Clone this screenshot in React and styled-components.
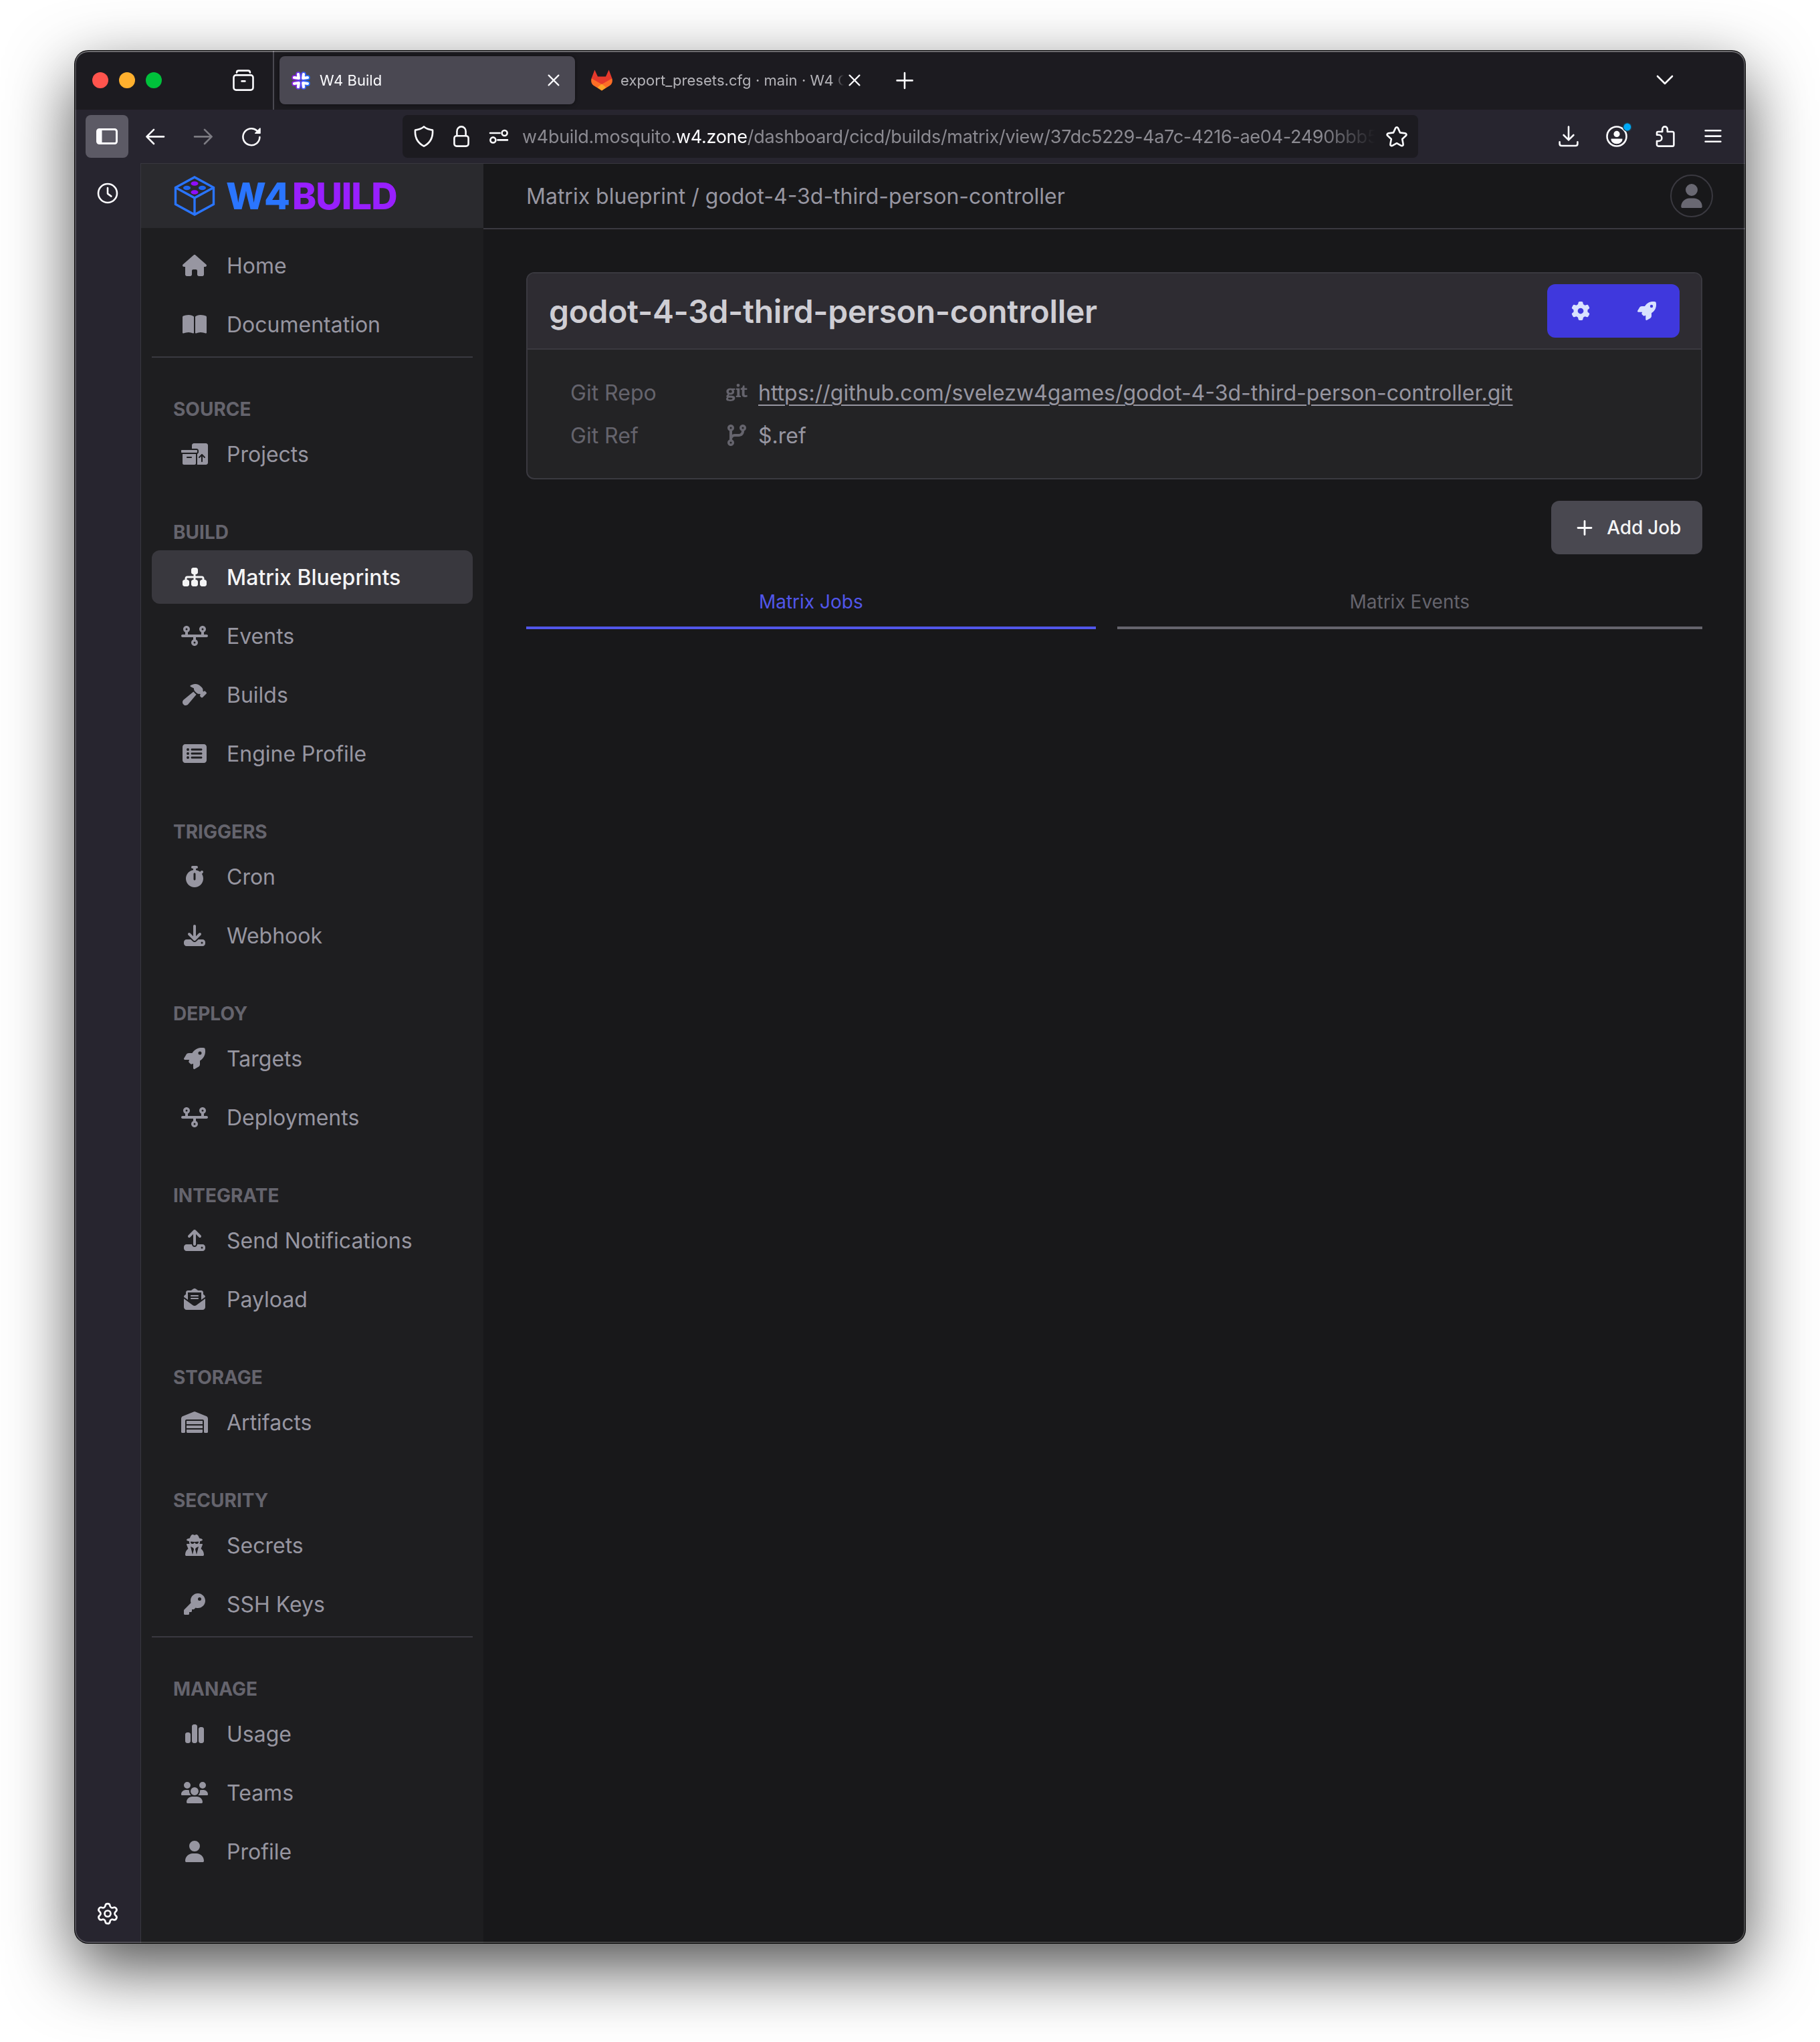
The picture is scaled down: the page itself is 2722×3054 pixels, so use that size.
import React from "react";
import styled, { createGlobalStyle } from "styled-components";
import { Settings } from "lucide-react";
import {
  FaBookOpen,
  FaBoxesPacking,
  FaChartSimple,
  FaCodeBranch,
  FaDownload,
  FaEnvelopeOpenText,
  FaGear,
  FaGit,
  FaHammer,
  FaHouse,
  FaKey,
  FaRectangleList,
  FaRocket,
  FaSitemap,
  FaStopwatch,
  FaTimeline,
  FaUpload,
  FaUser,
  FaUsers,
  FaUserSecret,
  FaWarehouse
} from "react-icons/fa6";

const colors = {
  chrome: "#1c1b20",
  toolbar: "#27252f",
  line: "#3a3940",
  page: "#18181a",
  sidebar: "#1e1e20",
  text: "#9796a1",
  muted: "#65646d",
  primary: "#5156ea"
};

const GlobalStyle = createGlobalStyle`
  * {
    box-sizing: border-box;
  }
  body {
    margin: 0;
    background: #fff;
    font-family: Inter, "Liberation Sans", sans-serif;
    overflow: hidden;
  }
`;

const Desktop = styled.div`
  width: 2722px;
  height: 3054px;
  padding: 76px 112px 148px;
`;

const Window = styled.div`
  position: relative;
  display: flex;
  flex-direction: column;
  width: 2498px;
  height: 2830px;
  overflow: hidden;
  border-radius: 20px;
  background: ${colors.toolbar};
  box-shadow: 0 0 0 1px #000, 0 36px 100px rgba(0, 0, 0, 0.7);

  &::after {
    content: "";
    position: absolute;
    inset: 0;
    border-radius: 20px;
    box-shadow: inset 0 0 0 2px rgba(255, 255, 255, 0.2),
      inset 0 2px 0 rgba(255, 255, 255, 0.2);
    pointer-events: none;
  }
`;

/* browser chrome */

const TabStrip = styled.div`
  display: flex;
  align-items: center;
  height: 88px;
  flex: none;
  padding: 0 104px 0 26px;
  background: ${colors.chrome};
`;

const Lights = styled.div`
  display: flex;
  gap: 16px;
  margin-right: 106px;
`;

const Light = styled.span`
  width: 24px;
  height: 24px;
  border-radius: 50%;
  background: ${props => props.$color};
`;

const StripDivider = styled.div`
  width: 2px;
  height: 100%;
  margin: 0 8px 0 28px;
  background: #4a4951;
`;

const Tab = styled.div`
  display: flex;
  align-items: center;
  width: 442px;
  height: 72px;
  margin-right: 8px;
  padding: 0 16px;
  border-radius: 8px;
  color: ${props => (props.$active ? "#fbfbfe" : "#b4b3b8")};
  background: ${props => (props.$active ? "#4a4852" : "transparent")};
  box-shadow: ${props => (props.$active ? "0 0 6px rgba(0, 0, 0, 0.5)" : "none")};
`;

const TabLabel = styled.span`
  flex: 1;
  min-width: 0;
  margin-left: 12px;
  overflow: hidden;
  white-space: nowrap;
  font-size: 22px;
  line-height: 32px;
  letter-spacing: 0.05px;
  mask-image: linear-gradient(to left, transparent, #000 16px);
`;

const NewTab = styled.div`
  display: flex;
  margin-left: 19px;
  margin-right: auto;
`;

const Glyph = styled.svg`
  display: block;
  width: 32px;
  height: 32px;
  flex: none;
  fill: none;
  stroke: #fbfbfe;
  stroke-width: ${props => props.$weight || 1.3};
  stroke-linecap: round;
  stroke-linejoin: round;
`;

const Fox = styled.svg`
  width: 32px;
  height: 32px;
  flex: none;
`;

const NavBar = styled.div`
  display: flex;
  align-items: center;
  gap: 8px;
  height: 80px;
  flex: none;
  padding: 0 16px;
`;

const ToolButton = styled.div`
  display: flex;
  align-items: center;
  justify-content: center;
  width: 64px;
  height: 64px;
  border-radius: 8px;
  background: ${props => (props.$active ? "#5c5a65" : "transparent")};
  opacity: ${props => (props.$disabled ? 0.4 : 1)};
`;

const UrlBar = styled.div`
  display: flex;
  align-items: center;
  width: 1519px;
  height: 64px;
  margin: 0 185px 0 186px;
  padding: 0 4px;
  border-radius: 8px;
  background: ${colors.chrome};
`;

const UrlIcon = styled.div`
  display: flex;
  justify-content: center;
  width: 56px;
  flex: none;
`;

const Url = styled.div`
  flex: 1;
  min-width: 0;
  margin: 2px 4px 0 7px;
  overflow: hidden;
  white-space: nowrap;
  color: #8b8a91;
  font-size: 27px;
  line-height: 40px;
  letter-spacing: -0.3px;
  mask-image: linear-gradient(to left, transparent, #000 80px);

  b {
    font-weight: 400;
    color: #fbfbfe;
  }
`;

const Below = styled.div`
  display: flex;
  flex: 1;
  min-height: 0;
`;

const Rail = styled.div`
  display: flex;
  flex-direction: column;
  align-items: center;
  justify-content: space-between;
  width: 98px;
  padding: 29px 0 26px;
  color: #fbfbfe;
`;

const Page = styled.div`
  display: flex;
  flex: 1;
  min-width: 0;
  border-top: 1px solid #38373e;
  border-left: 1px solid #38373e;
  background: ${colors.page};
`;

/* app sidebar */

const Sidebar = styled.nav`
  width: 512px;
  flex: none;
  background: ${colors.sidebar};
`;

const Brand = styled.div`
  display: flex;
  align-items: center;
  height: 96px;
  padding-left: 48px;
  background: #2a2a2e;
`;

const BrandName = styled.div`
  display: flex;
  margin-left: 15px;
  font-size: 55px;
  font-weight: 800;
  line-height: 96px;
  letter-spacing: -1px;
`;

const BrandPart = styled.span`
  color: ${props => props.$color};
  width: ${props => props.$width}px;
  transform: scaleX(${props => props.$stretch});
  transform-origin: left;
`;

const Menu = styled.div`
  padding: 16px 16px 0;
`;

const Items = styled.div`
  display: flex;
  flex-direction: column;
  gap: 8px;
`;

const SectionTitle = styled.div`
  margin: 56px 0 6px;
  padding-left: 32px;
  color: ${colors.muted};
  font-size: 28px;
  font-weight: 700;
  line-height: 42px;
`;

const Item = styled.div`
  display: flex;
  align-items: center;
  height: 80px;
  padding-left: 32px;
  border-radius: 12px;
  font-size: 32px;
  font-weight: ${props => (props.$active ? 500 : 400)};
  color: ${props => (props.$active ? "#f4f4f5" : colors.text)};
  background: ${props => (props.$active ? "#39383e" : "transparent")};
`;

const ItemIcon = styled.span`
  display: flex;
  justify-content: center;
  width: 64px;
  margin-right: 16px;

  svg {
    width: 40px;
    height: 32px;
  }
`;

const Divider = styled.div`
  height: 2px;
  margin-top: 8px;
  background: ${colors.line};
`;

/* page content */

const Main = styled.main`
  flex: 1;
  min-width: 0;
`;

const TopBar = styled.header`
  display: flex;
  align-items: center;
  justify-content: space-between;
  height: 98px;
  padding: 0 48px 0 64px;
  border-bottom: 2px solid ${colors.line};
  color: ${colors.text};
  font-size: 32px;
`;

const Avatar = styled.div`
  display: flex;
  align-items: center;
  justify-content: center;
  width: 64px;
  height: 64px;
  border: 2px solid ${colors.line};
  border-radius: 50%;
  color: #696872;

  svg {
    width: 32px;
    height: 36px;
  }
`;

const Content = styled.div`
  padding: 64px;
`;

const Card = styled.section`
  overflow: hidden;
  border: 2px solid ${colors.line};
  border-radius: 12px;
  background: #232325;
`;

const CardHeader = styled.div`
  display: flex;
  align-items: center;
  justify-content: space-between;
  height: 114px;
  padding: 0 32px;
  border-bottom: 2px solid ${colors.line};
  background: #2e2c32;
`;

const CardTitle = styled.h1`
  margin: 0;
  color: #cfced4;
  font-size: 48px;
  font-weight: 600;
  letter-spacing: -0.33px;
`;

const ButtonGroup = styled.div`
  display: flex;
  width: 198px;
  height: 80px;
  border-radius: 12px;
  background: #3f38dd;
`;

const IconButton = styled.div`
  display: flex;
  flex: 1;
  align-items: center;
  justify-content: center;
  color: #d9e2ff;
  font-size: 28px;
`;

const CardBody = styled.div`
  padding: 32px 64px;
`;

const Field = styled.div`
  display: flex;
  align-items: center;
  height: 64px;
  color: ${colors.text};
  font-size: 32px;
`;

const FieldLabel = styled.span`
  width: 217px;
  color: ${colors.muted};
`;

const FieldIcon = styled.span`
  display: flex;
  justify-content: center;
  width: 64px;
  color: ${colors.muted};
`;

const Link = styled.a`
  text-decoration: underline;
  text-decoration-thickness: 2px;
  text-underline-offset: 6px;
`;

const Actions = styled.div`
  display: flex;
  justify-content: flex-end;
  margin-top: 32px;
`;

const AddButton = styled.div`
  display: flex;
  align-items: center;
  gap: 17px;
  height: 80px;
  padding: 0 32px 0 34px;
  border-radius: 12px;
  color: #f4f4f5;
  background: #494850;
  font-size: 28px;
  font-weight: 500;
  letter-spacing: -0.2px;
`;

const Tabs = styled.div`
  display: flex;
  gap: 32px;
  margin-top: 32px;
`;

const PageTab = styled.div`
  flex: 1 1 auto;
  height: 80px;
  border-bottom: 4px solid ${props => (props.$active ? colors.primary : colors.muted)};
  color: ${props => (props.$active ? colors.primary : colors.muted)};
  font-size: 28px;
  line-height: 78px;
  text-align: center;
`;

const PETALS =
  "M12 7l.8 6L6 12M20 7l-.8 6 6.800-1M12 26l.8-6L6 21M20 26l-.8-6 6.800 1";

const W4Icon = () => (
  <Glyph viewBox="0 0 32 32">
    <defs>
      <linearGradient id="w4" x1="0" x2="1">
        <stop offset="0" stopColor="#8a1fe0" />
        <stop offset="1" stopColor="#2471ff" />
      </linearGradient>
    </defs>
    <path d={PETALS} stroke="url(#w4)" strokeWidth="7.5" />
    <path d={PETALS} stroke="#fff" strokeWidth="4.2" />
  </Glyph>
);

const GitlabIcon = () => (
  <Fox viewBox="0 0 32 32">
    <path fill="#e5392c" d="M5.4.6 10 10.5h12L26.6.6l4.8 12.7L16 31 .6 13.3z" />
    <path
      fill="#fc6d26"
      d="M.6 13.3C-.8 18.5 1 21.6 4 24l12 7.5L28 24c3-2.4 4.8-5.5 3.4-10.7L16 22z"
    />
    <path fill="#e5392c" d="M4.500 11 16 22l11.500-11z" />
    <path fill="#fca326" d="m9.600 26.700 6.400-5.200 6.400 5.200L16 31.500z" />
  </Fox>
);

const CloseIcon = () => (
  <Glyph viewBox="0 0 16 16" $weight={1.1}>
    <path d="m4.3 4.3 7.4 7.4M11.7 4.3l-7.4 7.4" />
  </Glyph>
);

const Cube = () => (
  <svg width="64" height="60" viewBox="0 0 64 60" fill="none">
    <path
      d="M32 2 60.5 17.5v25L32 58 3.5 42.5v-25zM3.5 17.5 32 33l28.5-15.5M32 33v25"
      stroke="#2a75ff"
      strokeWidth="3.4"
    />
    <ellipse cx="32" cy="11.5" rx="5.5" ry="3.3" fill="#8f0dff" />
    <ellipse cx="32" cy="24.5" rx="5.5" ry="3.3" fill="#8f0dff" />
    <ellipse cx="20.5" cy="18" rx="5.5" ry="3.3" fill="#1f66f0" />
    <ellipse cx="43.5" cy="18" rx="5.5" ry="3.3" fill="#1f66f0" />
  </svg>
);

const sections = [
  {
    items: [
      { icon: FaHouse, label: "Home" },
      { icon: FaBookOpen, label: "Documentation" }
    ],
    divider: true
  },
  { title: "SOURCE", items: [{ icon: FaBoxesPacking, label: "Projects" }] },
  {
    title: "BUILD",
    items: [
      { icon: FaSitemap, label: "Matrix Blueprints", active: true },
      { icon: FaTimeline, label: "Events" },
      { icon: FaHammer, label: "Builds" },
      { icon: FaRectangleList, label: "Engine Profile" }
    ]
  },
  {
    title: "TRIGGERS",
    items: [
      { icon: FaStopwatch, label: "Cron" },
      { icon: FaDownload, label: "Webhook" }
    ]
  },
  {
    title: "DEPLOY",
    items: [
      { icon: FaRocket, label: "Targets" },
      { icon: FaTimeline, label: "Deployments" }
    ]
  },
  {
    title: "INTEGRATE",
    items: [
      { icon: FaUpload, label: "Send Notifications" },
      { icon: FaEnvelopeOpenText, label: "Payload" }
    ]
  },
  { title: "STORAGE", items: [{ icon: FaWarehouse, label: "Artifacts" }] },
  {
    title: "SECURITY",
    items: [
      { icon: FaUserSecret, label: "Secrets" },
      { icon: FaKey, label: "SSH Keys" }
    ],
    divider: true
  },
  {
    title: "MANAGE",
    items: [
      { icon: FaChartSimple, label: "Usage" },
      { icon: FaUsers, label: "Teams" },
      { icon: FaUser, label: "Profile" }
    ]
  }
];

const BrowserTabs = () => (
  <TabStrip>
    <Lights>
      <Light $color="#ff544d" />
      <Light $color="#ffb02e" />
      <Light $color="#00c13b" />
    </Lights>
    <Glyph viewBox="0 0 16 16">
      <path d="M3 2.300C3 1.200 3.700.8 4.500.8h7c.8 0 1.500.4 1.500 1.500" />
      <rect x=".75" y="4.2" width="14.5" height="11.1" rx="1.8" />
      <path d="M6.800 8.700h2.400" />
    </Glyph>
    <StripDivider />
    <Tab $active>
      <W4Icon />
      <TabLabel>W4 Build</TabLabel>
      <CloseIcon />
    </Tab>
    <Tab>
      <GitlabIcon />
      <TabLabel>export_presets.cfg · main · W4 G</TabLabel>
      <CloseIcon />
    </Tab>
    <NewTab>
      <Glyph viewBox="0 0 16 16">
        <path d="M8 2.500v11.500M2.300 8.200h11.500" />
      </Glyph>
    </NewTab>
    <Glyph viewBox="0 0 16 16">
      <path d="m2.500 5 5.500 5.500L13.500 5" />
    </Glyph>
  </TabStrip>
);

const BrowserToolbar = () => (
  <NavBar>
    <ToolButton $active>
      <Glyph viewBox="0 0 16 16" $weight={1.5}>
        <rect x=".75" y="2.75" width="14.5" height="10.5" rx="1.5" />
        <path d="M1.500 3.500h2v9h-2z" fill="#fbfbfe" />
      </Glyph>
    </ToolButton>
    <ToolButton>
      <Glyph viewBox="0 0 16 16">
        <path d="M14.500 8.200H1.800M7 2.900 1.700 8.200 7 13.500" />
      </Glyph>
    </ToolButton>
    <ToolButton $disabled>
      <Glyph viewBox="0 0 16 16">
        <path d="M1.500 8.200h12.700M9 2.900l5.300 5.300L9 13.500" />
      </Glyph>
    </ToolButton>
    <ToolButton>
      <Glyph viewBox="0 0 16 16">
        <path d="M14.200 8.500A6.250 6.250 0 1 1 12 3.600" />
        <path d="M14.500 2v3.600h-3.600z" fill="#fbfbfe" strokeWidth=".8" />
      </Glyph>
    </ToolButton>
    <UrlBar>
      <UrlIcon>
        <Glyph viewBox="0 0 16 16">
          <path d="M8 .7c1.500 1.300 4 2.200 6.500 2.600.4 5.600-2 9.700-6.500 12-4.500-2.300-6.900-6.400-6.500-12C4 2.900 6.500 2 8 .7z" />
        </Glyph>
      </UrlIcon>
      <UrlIcon>
        <Glyph viewBox="0 0 16 16">
          <rect x="2.7" y="7.6" width="10.6" height="7.7" rx="1.8" />
          <path d="M4.700 7.500V4.200a3.300 3.500 0 0 1 6.600 0v3.300" />
        </Glyph>
      </UrlIcon>
      <UrlIcon>
        <Glyph viewBox="0 0 16 16">
          <path d="M1.500 5.500h7.300M7.200 10.700h7.300" />
          <circle cx="12.3" cy="5.5" r="2" />
          <circle cx="3.7" cy="10.7" r="2" />
        </Glyph>
      </UrlIcon>
      <Url>
        w4build.mosquito.<b>w4.zone</b>
        /dashboard/cicd/builds/matrix/view/37dc5229-4a7c-4216-ae04-2490bbb5
      </Url>
      <UrlIcon>
        <Glyph viewBox="0 0 16 16">
          <path d="M8 1.100c.4 0 .7.200.9.600l1.600 3.500 3.800.5c.9.100 1.200 1.100.6 1.700l-2.800 2.600.7 3.800c.2.900-.7 1.500-1.500 1.100L8 13.100l-3.300 1.800c-.8.400-1.700-.2-1.500-1.100l.7-3.800L1.100 7.400c-.6-.6-.3-1.600.6-1.700l3.800-.5 1.600-3.500c.2-.4.500-.6.900-.6z" />
        </Glyph>
      </UrlIcon>
    </UrlBar>
    <ToolButton>
      <Glyph viewBox="0 0 16 16">
        <path d="M8 .8v9.900M4.300 7 8 10.700 11.700 7M1.300 12.200v1.300c0 .9.600 1.500 1.500 1.500h10.400c.9 0 1.500-.6 1.500-1.500v-1.300" />
      </Glyph>
    </ToolButton>
    <ToolButton>
      <Glyph viewBox="0 0 16 16" overflow="visible">
        <circle cx="8" cy="8" r="7.25" />
        <circle cx="8" cy="6.2" r="2.3" fill="#fbfbfe" stroke="none" />
        <path
          d="M4 10h8c0 2.100-1.800 3.300-4 3.300S4 12.100 4 10z"
          fill="#fbfbfe"
          strokeWidth=".6"
        />
        <circle cx="15.9" cy="1" r="3.4" fill="#1b4459" stroke="none" />
        <circle cx="15.9" cy="1" r="2.7" fill="#00a9f7" stroke="none" />
      </Glyph>
    </ToolButton>
    <ToolButton>
      <Glyph viewBox="0 0 16 16">
        <path d="M2 14.200V11.500h1.400a2 2 0 0 0 0-4.600H2V5.400c0-.5.400-.9.900-.9h3.200V2.600a1.900 1.900 0 0 1 3.800 0v1.900h3.700c.6 0 1.100.5 1.100 1.100v8.600c0 .6-.5 1.100-1.100 1.100H3.100c-.6 0-1.100-.5-1.100-1.100z" />
      </Glyph>
    </ToolButton>
    <ToolButton>
      <Glyph viewBox="0 0 16 16">
        <path d="M2.300 3.600h11.400M2.300 7.800h11.400M2.300 11.900h11.400" />
      </Glyph>
    </ToolButton>
  </NavBar>
);

const AppSidebar = () => (
  <Sidebar>
    <Brand>
      <Cube />
      <BrandName>
        <BrandPart $color="#2a75ff" $width={99} $stretch={1.03}>
          W4
        </BrandPart>
        <BrandPart $color="#981fff" $width={160} $stretch={0.99}>
          BUILD
        </BrandPart>
      </BrandName>
    </Brand>
    <Menu>
      {sections.map(section => (
        <React.Fragment key={section.title || "top"}>
          {section.title && <SectionTitle>{section.title}</SectionTitle>}
          <Items>
            {section.items.map(({ icon: Icon, label, active }) => (
              <Item key={label} $active={active}>
                <ItemIcon>
                  <Icon />
                </ItemIcon>
                {label}
              </Item>
            ))}
          </Items>
          {section.divider && <Divider />}
        </React.Fragment>
      ))}
    </Menu>
  </Sidebar>
);

const Blueprint = () => (
  <Main>
    <TopBar>
      <span>Matrix blueprint / godot-4-3d-third-person-controller</span>
      <Avatar>
        <FaUser />
      </Avatar>
    </TopBar>
    <Content>
      <Card>
        <CardHeader>
          <CardTitle>godot-4-3d-third-person-controller</CardTitle>
          <ButtonGroup>
            <IconButton>
              <FaGear />
            </IconButton>
            <IconButton>
              <FaRocket />
            </IconButton>
          </ButtonGroup>
        </CardHeader>
        <CardBody>
          <Field>
            <FieldLabel>Git Repo</FieldLabel>
            <FieldIcon>
              <FaGit />
            </FieldIcon>
            <Link>
              https://github.com/svelezw4games/godot-4-3d-third-person-controller.git
            </Link>
          </Field>
          <Field>
            <FieldLabel>Git Ref</FieldLabel>
            <FieldIcon>
              <FaCodeBranch />
            </FieldIcon>
            $.ref
          </Field>
        </CardBody>
      </Card>
      <Actions>
        <AddButton>
          <Glyph viewBox="0 0 32 32" $weight={2.8}>
            <path d="M16 6.500v20M6 16.500h20" />
          </Glyph>
          Add Job
        </AddButton>
      </Actions>
      <Tabs>
        <PageTab $active>Matrix Jobs</PageTab>
        <PageTab>Matrix Events</PageTab>
      </Tabs>
    </Content>
  </Main>
);

const App = () => (
  <>
    <GlobalStyle />
    <Desktop>
      <Window>
        <BrowserTabs />
        <BrowserToolbar />
        <Below>
          <Rail>
            <Glyph viewBox="0 0 16 16">
              <circle cx="8" cy="8" r="7" />
              <path d="M8 4v4.300l2.700 2" />
            </Glyph>
            <Settings size={36} strokeWidth={1.8} />
          </Rail>
          <Page>
            <AppSidebar />
            <Blueprint />
          </Page>
        </Below>
      </Window>
    </Desktop>
  </>
);

export default App;
